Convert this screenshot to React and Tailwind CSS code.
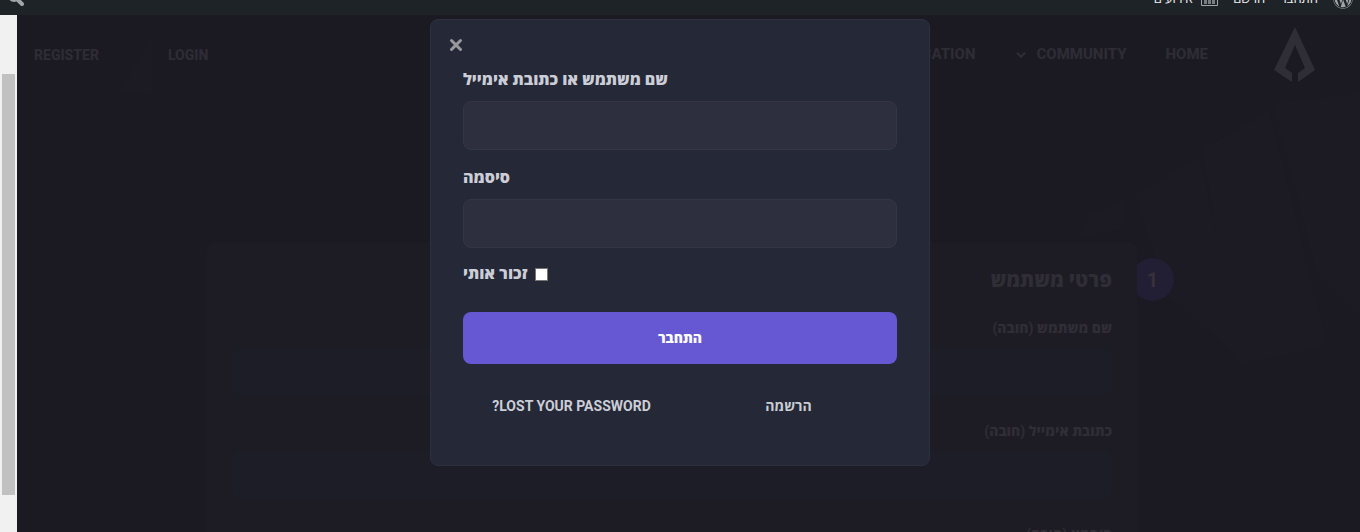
import React, { useState } from 'react';
import { ChevronDown, X } from 'lucide-react';
import { FaWordpress } from 'react-icons/fa';

const profileFields = [
  { id: 'signup_username', label: 'שם משתמש (חובה)', type: 'text' },
  { id: 'signup_email', label: 'כתובת אימייל (חובה)', type: 'email' },
  { id: 'signup_password', label: 'סיסמא (חובה)', type: 'password' },
];

function CalendarIcon() {
  return (
    <svg width="17" height="14" viewBox="0 0 17 14" fill="none" stroke="#a0a5aa">
      <path d="M.5 .5h16v13H.5z M.5 4.5h16" />
      <path d="M4.5 6v6M8.5 6v6M12.5 6v6" strokeWidth="3" opacity=".7" />
    </svg>
  );
}

function SearchIcon() {
  return (
    <svg width="18" height="18" viewBox="0 0 18 18" fill="none" stroke="#a0a5aa">
      <circle cx="7" cy="6" r="5" strokeWidth="2" />
      <path d="M11 10l4 4" strokeWidth="4" strokeLinecap="round" />
    </svg>
  );
}

function AdminBar() {
  return (
    <div className="flex h-[15px] shrink-0 items-end justify-between overflow-hidden bg-[#1d2327] pr-[7px] pl-[7px] text-[13px] leading-8 text-[#f0f0f1]">
      <div className="flex h-8 shrink-0 items-center gap-[15px]">
        <a href="#about" aria-label="WordPress">
          <FaWordpress size={20} color="#a0a5aa" />
        </a>
        <a href="#login">התחבר</a>
        <a href="#register">הרשם</a>
        <a href="#events" className="flex items-center gap-2">
          <CalendarIcon />
          אירועים
        </a>
      </div>
      <button type="button" aria-label="חיפוש" className="flex h-8 items-center">
        <SearchIcon />
      </button>
    </div>
  );
}

function Logo() {
  return (
    <svg width="42" height="56" viewBox="0 0 42 56" fill="#2f2d36">
      <path d="M21 0 L41 43 L24 55 V46 L31 41 L21 18 L11 41 L18 46 V55 L0 43 Z" />
    </svg>
  );
}

function Header() {
  return (
    <header className="flex h-[79px] items-center justify-between pr-11 pl-[17px] font-extrabold text-[#2e2c35]">
      <div className="flex items-center">
        <a href="#home" aria-label="Logo">
          <Logo />
        </a>
        <nav className="mr-[66px] flex items-center gap-[39px] text-[15px]">
          <a href="#home">HOME</a>
          <a href="#community" className="flex items-center gap-2">
            COMMUNITY
            <ChevronDown size={14} strokeWidth={4} />
          </a>
          <a href="#education">EDUCATION</a>
        </nav>
      </div>
      <div className="flex items-center gap-[69px] text-sm">
        <a href="#login">LOGIN</a>
        <a href="#register">REGISTER</a>
      </div>
    </header>
  );
}

function Backdrop() {
  return (
    <svg className="absolute inset-0 h-full w-full" preserveAspectRatio="none" viewBox="0 0 1343 517" fill="#1c1b23">
      <path d="M1118 180 L1182 142 L1230 350 L1150 280Z" />
      <path d="M1186 134 L1252 96 L1310 330 L1220 350Z" />
      <path d="M1256 88 L1343 78 V300 L1300 260Z" />
      <path d="M1072 200 L1108 186 L1106 214 L1064 222Z" />
      <path d="M104 76 L136 17 V80Z" />
    </svg>
  );
}

function RegisterForm() {
  return (
    <section className="relative mr-[223px] ml-[190px] mt-[149px]">
      <span className="absolute top-[15px] -right-[37px] flex size-[43px] items-center justify-center rounded-full bg-[#221e33] text-xl font-extrabold text-[#33313a]">
        1
      </span>
      <div className="relative h-[420px] rounded-lg bg-[#1d1b24] px-[25px] pt-[21px] text-[#2f2d36]">
        <h2 className="mb-5 text-xl leading-8 font-extrabold">פרטי משתמש</h2>
        {profileFields.map((f) => (
          <div key={f.id} className="mb-[23px]">
            <label htmlFor={f.id} className="mb-2 block text-sm leading-6 font-extrabold">
              {f.label}
            </label>
            <input
              id={f.id}
              type={f.type}
              className="block h-12 w-full rounded-lg bg-[#1c1d26] px-4 outline-none"
            />
          </div>
        ))}
      </div>
    </section>
  );
}

function LoginModal({ onClose }) {
  const [remember, setRemember] = useState(false);
  const inputClass =
    'block h-[49px] w-full rounded-lg border border-[#343644] bg-[#2d2f3f] px-4 text-[#cbced6] outline-none';

  return (
    <div className="fixed inset-0 z-10 flex items-start justify-center pt-[19px]">
      <div
        role="dialog"
        aria-modal="true"
        className="relative w-full max-w-[500px] rounded-lg border border-[#2d303e] bg-[#252836] px-8 pt-12 pb-[49px] text-left text-[#cbced6]"
      >
        <button
          type="button"
          aria-label="סגור"
          onClick={onClose}
          className="absolute top-4 left-4 text-[#97999f]"
        >
          <X size={18} strokeWidth={4} />
        </button>
        <form onSubmit={(e) => e.preventDefault()}>
          <label htmlFor="user_login" className="mb-[9px] block leading-6 font-extrabold">
            שם משתמש או כתובת אימייל
          </label>
          <input id="user_login" type="text" className={inputClass} />
          <label htmlFor="user_pass" className="mt-4 mb-[9px] block leading-6 font-extrabold">
            סיסמה
          </label>
          <input id="user_pass" type="password" className={inputClass} />
          <div className="mt-4 flex h-5 items-center justify-end gap-2">
            <input
              id="rememberme"
              type="checkbox"
              checked={remember}
              onChange={(e) => setRemember(e.target.checked)}
              className="size-[13px] appearance-none border border-[#767676] bg-white checked:bg-[#6658d3]"
            />
            <label htmlFor="rememberme" className="leading-5 font-extrabold">
              זכור אותי
            </label>
          </div>
          <button
            type="submit"
            className="mt-7 h-[52px] w-full rounded-lg bg-[#6658d3] text-sm font-extrabold text-white"
          >
            התחבר
          </button>
        </form>
        <div className="mt-8 flex text-center text-sm leading-5 font-bold">
          <a href="#register" className="flex-1">הרשמה</a>
          <a href="#lost" className="flex-1">LOST YOUR PASSWORD?</a>
        </div>
      </div>
    </div>
  );
}

export default function App() {
  const [open, setOpen] = useState(true);

  return (
    <div
      dir="rtl"
      className="flex h-screen flex-col overflow-hidden bg-[#1b1a22] font-[Roboto,'Open_Sans','Noto_Sans',sans-serif]"
    >
      <AdminBar />
      <div className="flex min-h-0 flex-1">
        <main className="relative min-w-0 flex-1 overflow-hidden">
          <Backdrop />
          <div className="relative">
            <Header />
            <RegisterForm />
          </div>
        </main>
        {/* page scrollbar, on the left in rtl */}
        <div className="w-[17px] shrink-0 bg-[#f1f1f1] px-0.5 pt-[59px]">
          <div className="h-[421px] bg-[#c1c1c1]" />
        </div>
      </div>
      {open && <LoginModal onClose={() => setOpen(false)} />}
    </div>
  );
}
